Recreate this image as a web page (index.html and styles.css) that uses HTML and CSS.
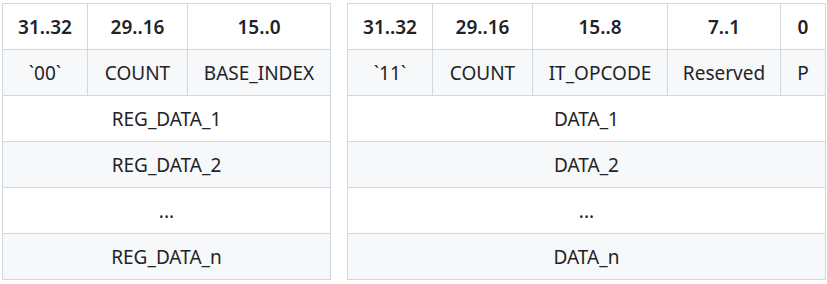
FILE: index.html
```html
<!DOCTYPE html>
<html>
<head>
<meta charset="utf-8">
<link rel="stylesheet" href="styles.css">
</head>
<body>
<div class="wrap">
  <table class="fmt t1">
    <colgroup><col class="c85"><col class="c100"><col class="c143"></colgroup>
    <thead>
      <tr><th>31..32</th><th>29..16</th><th>15..0</th></tr>
    </thead>
    <tbody>
      <tr><td>`00`</td><td>COUNT</td><td>BASE_INDEX</td></tr>
      <tr><td colspan="3">REG_DATA_1</td></tr>
      <tr><td colspan="3">REG_DATA_2</td></tr>
      <tr><td colspan="3">...</td></tr>
      <tr><td colspan="3">REG_DATA_n</td></tr>
    </tbody>
  </table>
  <table class="fmt t2">
    <colgroup><col class="c86"><col class="c100"><col class="c135"><col class="c113"><col class="c44"></colgroup>
    <thead>
      <tr><th>31..32</th><th>29..16</th><th>15..8</th><th>7..1</th><th>0</th></tr>
    </thead>
    <tbody>
      <tr><td>`11`</td><td>COUNT</td><td>IT_OPCODE</td><td>Reserved</td><td>P</td></tr>
      <tr><td colspan="5">DATA_1</td></tr>
      <tr><td colspan="5">DATA_2</td></tr>
      <tr><td colspan="5">...</td></tr>
      <tr><td colspan="5">DATA_n</td></tr>
    </tbody>
  </table>
</div>
</body>
</html>
```
FILE: styles.css
```css
html, body {
  margin: 0;
  padding: 0;
  background: #ffffff;
}
body {
  font-family: "Noto Sans", "Open Sans", sans-serif;
  font-size: 19px;
  color: #1f2328;
}
.wrap {
  display: flex;
  align-items: flex-start;
  gap: 16px;
  padding: 3px 0 0 2px;
}
.fmt {
  border-collapse: collapse;
  border-spacing: 0;
  table-layout: fixed;
}
.t1 { width: 329px; }
.t2 { width: 479px; }
.c85 { width: 85px; }
.c86 { width: 85px; }
.c100 { width: 100px; }
.c143 { width: 143px; }
.c135 { width: 135px; }
.c113 { width: 113px; }
.c44 { width: 45px; }
.fmt th, .fmt td {
  border: 1px solid #d0d7de;
  height: 46px;
  padding: 0 4px;
  box-sizing: border-box;
  text-align: center;
  vertical-align: middle;
  white-space: nowrap;
  line-height: 24px;
}
.fmt th {
  font-weight: 600;
}
.fmt tr {
  background: #ffffff;
}
.fmt tbody tr:nth-child(odd) {
  background: #f6f8fa;
}
```
